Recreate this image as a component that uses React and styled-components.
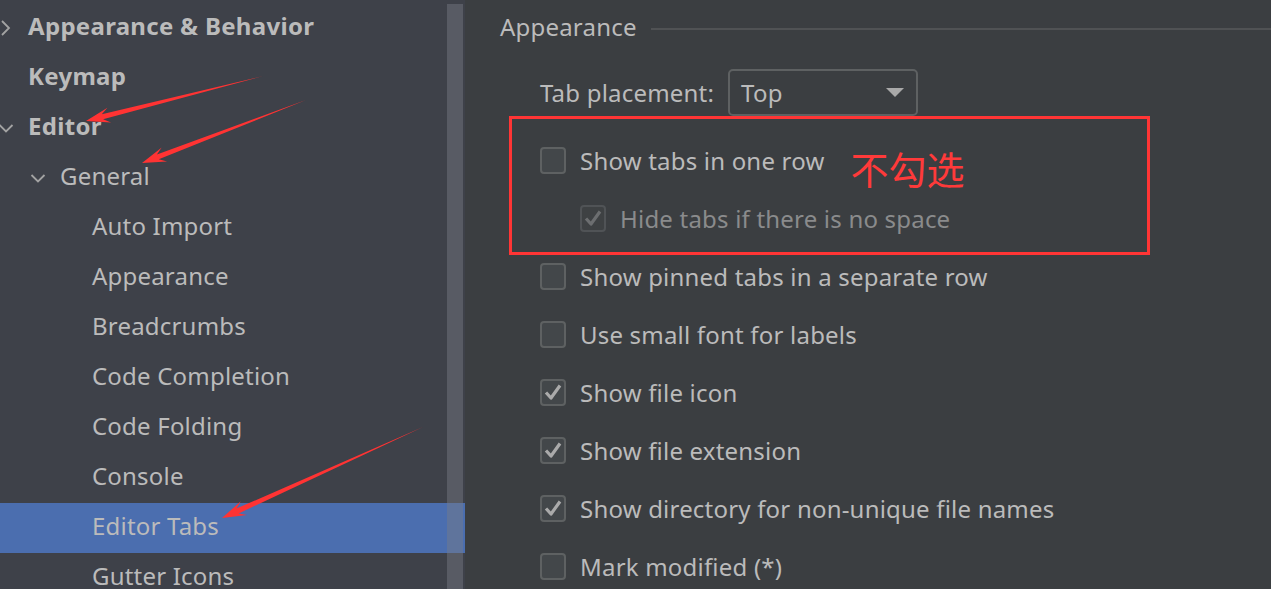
import React from "react";
import styled, { createGlobalStyle } from "styled-components";

const Global = createGlobalStyle`
  html, body { margin: 0; padding: 0; background: #3b3e41; }
  body { font-family: "Noto Sans", "Open Sans", sans-serif; }
  * { box-sizing: border-box; }
`;

const Page = styled.div`
  position: relative;
  width: 1271px;
  height: 589px;
  overflow: hidden;
  display: flex;
  background: #3b3e41;
  color: #bbbbbb;
  font-family: "Noto Sans", "Open Sans", sans-serif;
  letter-spacing: 0.2px;
`;

const Sidebar = styled.div`
  position: relative;
  width: 465px;
  flex: none;
  background: #3e4149;
  display: flex;
`;

const Tree = styled.div`
  flex: 1;
  padding-top: 3px;
  display: flex;
  flex-direction: column;
`;

const Row = styled.div`
  height: 50px;
  flex: none;
  display: flex;
  align-items: center;
  padding-left: ${(p) => p.$level * 32}px;
  background: ${(p) => (p.$selected ? "#4b6eaf" : "transparent")};
  margin-right: ${(p) => (p.$selected ? "0" : "18px")};
  font-size: 24px;
  font-weight: ${(p) => (p.$bold ? 700 : 400)};
  letter-spacing: ${(p) => (p.$bold ? "0.3px" : "0.2px")};
  color: #bbbbbb;
  white-space: nowrap;
`;

const Slot = styled.span`
  width: 28px;
  flex: none;
  display: flex;
  align-items: center;
  svg { margin-left: -2px; display: block; }
`;

const Label = styled.span`
  line-height: 1;
  margin-top: -4px;
`;

const ScrollTrack = styled.div`
  position: absolute;
  top: 4px;
  bottom: 0;
  left: 447px;
  width: 16px;
  background: rgba(120, 124, 134, 0.45);
  pointer-events: none;
`;

const Content = styled.div`
  flex: 1;
  padding-left: 35px;
  display: flex;
  flex-direction: column;
  & > * { flex: none; }
`;

const Header = styled.div`
  height: 40px;
  margin-top: 6px;
  display: flex;
  align-items: center;
  font-size: 24px;
`;

const HeaderLine = styled.div`
  flex: 1;
  height: 2px;
  margin-left: 14px;
  margin-top: 5px;
  background: #505254;
`;

const PlacementRow = styled.div`
  margin-top: 23px;
  padding-left: 40px;
  display: flex;
  align-items: center;
  gap: 14px;
  font-size: 24px;
`;

const Combo = styled.div`
  width: 190px;
  height: 47px;
  flex: none;
  border: 2px solid #5e6162;
  border-radius: 5px;
  display: flex;
  align-items: center;
  justify-content: space-between;
  padding: 0 12px 0 11px;
  font-size: 24px;
  color: #bbbbbb;
`;

const Annotated = styled.div`
  width: 641px;
  margin-left: 9px;
  border: 3px solid #ff3535;
  padding: 12px 0 5px 28px;
  margin-bottom: -8px;
`;

const Options = styled.div`
  padding-left: 40px;
  display: flex;
  flex-direction: column;
`;

const Option = styled.div`
  height: 58px;
  flex: none;
  display: flex;
  align-items: center;
  gap: 14px;
  padding-left: ${(p) => (p.$indent ? 40 : 0)}px;
  font-size: 24px;
  color: ${(p) => (p.$disabled ? "#8a8b8c" : "#bbbbbb")};
  white-space: nowrap;
`;

const Box = styled.span`
  width: 26px;
  height: 27px;
  flex: none;
  border: 2px solid ${(p) => (p.$disabled ? "#505356" : "#5e6162")};
  border-radius: 4px;
  background: ${(p) => (p.$disabled ? "#3e4143" : "#43474a")};
  display: flex;
  align-items: center;
  justify-content: center;
`;

const Note = styled.span`
  margin-left: 12px;
  margin-top: 16px;
  font-family: "Noto Sans CJK SC", sans-serif;
  font-size: 38px;
  letter-spacing: 0;
  color: #ff3a3a;
  line-height: 1;
`;

const Overlay = styled.svg`
  position: absolute;
  left: 0;
  top: 0;
  width: 1271px;
  height: 589px;
  pointer-events: none;
`;

function Chevron({ dir }) {
  return (
    <svg width="16" height="16" viewBox="0 0 16 16">
      {dir === "right" ? (
        <polyline points="4,1 11,8 4,15" fill="none" stroke="#a3a3a3" strokeWidth="1.8" />
      ) : (
        <polyline points="1.5,5 8,11.5 14.5,5" fill="none" stroke="#a3a3a3" strokeWidth="1.8" />
      )}
    </svg>
  );
}

function Check({ disabled }) {
  return (
    <svg width="20" height="20" viewBox="0 0 20 20">
      <polyline
        points="3,10.5 8,16 17,3.5"
        fill="none"
        stroke={disabled ? "#6c6e70" : "#aaaaaa"}
        strokeWidth="3.2"
        strokeLinejoin="round"
      />
    </svg>
  );
}

function CheckOption({ label, checked, disabled, indent, children }) {
  return (
    <Option $disabled={disabled} $indent={indent}>
      <Box $disabled={disabled}>{checked && <Check disabled={disabled} />}</Box>
      <span>{label}</span>
      {children}
    </Option>
  );
}

function arrowPoints(x1, y1, x2, y2) {
  const dx = x2 - x1;
  const dy = y2 - y1;
  const L = Math.hypot(dx, dy);
  const ux = dx / L;
  const uy = dy / L;
  const nx = -uy;
  const ny = ux;
  const head = 24;
  const back = 17;
  const p = (d, w) => [x1 + ux * d + nx * w, y1 + uy * d + ny * w];
  const pts = [
    p(0, 0),
    p(L - back, 2.6),
    p(L - head, 7.5),
    p(L, 0),
    p(L - head, -7.5),
    p(L - back, -2.6),
  ];
  return pts.map((q) => q.map((v) => v.toFixed(1)).join(",")).join(" ");
}

const tree = [
  { label: "Appearance & Behavior", level: 0, bold: true, chevron: "right" },
  { label: "Keymap", level: 0, bold: true },
  { label: "Editor", level: 0, bold: true, chevron: "down" },
  { label: "General", level: 1, chevron: "down" },
  { label: "Auto Import", level: 2 },
  { label: "Appearance", level: 2 },
  { label: "Breadcrumbs", level: 2 },
  { label: "Code Completion", level: 2 },
  { label: "Code Folding", level: 2 },
  { label: "Console", level: 2 },
  { label: "Editor Tabs", level: 2, selected: true },
  { label: "Gutter Icons", level: 2 },
];

const arrows = [
  [263, 76, 86, 121],
  [306, 100, 142, 163],
  [423, 427, 222, 518],
];

export default function App() {
  return (
    <>
      <Global />
      <Page>
        <Sidebar>
          <Tree>
            {tree.map((t) => (
              <Row key={t.label} $level={t.level} $bold={t.bold} $selected={t.selected}>
                <Slot>{t.chevron && <Chevron dir={t.chevron} />}</Slot>
                <Label>{t.label}</Label>
              </Row>
            ))}
          </Tree>
          <ScrollTrack />
        </Sidebar>
        <Content>
          <Header>
            <span>Appearance</span>
            <HeaderLine />
          </Header>
          <PlacementRow>
            <span>Tab placement:</span>
            <Combo>
              <span>Top</span>
              <svg width="18" height="10" viewBox="0 0 18 10">
                <polygon points="0,0 18,0 9,9" fill="#a9a9a9" />
              </svg>
            </Combo>
          </PlacementRow>
          <Annotated>
            <CheckOption label="Show tabs in one row">
              <Note>不勾选</Note>
            </CheckOption>
            <CheckOption label="Hide tabs if there is no space" checked disabled indent />
          </Annotated>
          <Options>
            <CheckOption label="Show pinned tabs in a separate row" />
            <CheckOption label="Use small font for labels" />
            <CheckOption label="Show file icon" checked />
            <CheckOption label="Show file extension" checked />
            <CheckOption label="Show directory for non-unique file names" checked />
            <CheckOption label="Mark modified (*)" />
          </Options>
        </Content>
        <Overlay viewBox="0 0 1271 589">
          {arrows.map((a, i) => (
            <polygon key={i} points={arrowPoints(...a)} fill="#ff3333" />
          ))}
        </Overlay>
      </Page>
    </>
  );
}
